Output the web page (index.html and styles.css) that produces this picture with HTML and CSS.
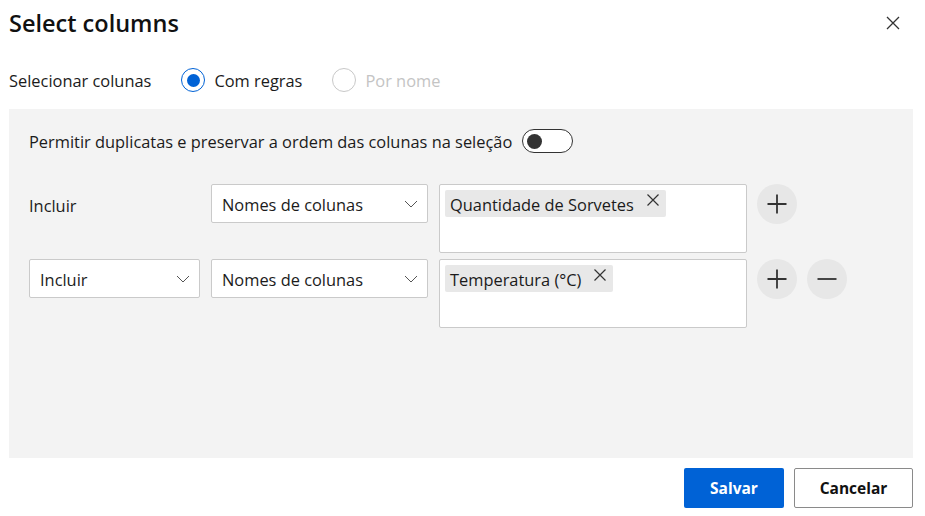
FILE: index.html
```html
<!DOCTYPE html>
<html lang="pt">
<head>
<meta charset="utf-8">
<title>Select columns</title>
<link rel="stylesheet" href="styles.css">
</head>
<body>
<div class="dialog">
  <header class="header">
    <h1 class="title">Select columns</h1>
    <button class="close" aria-label="Fechar">
      <svg width="14" height="14" viewBox="0 0 14 14"><path d="M1 1L13 13M13 1L1 13" stroke="#333" stroke-width="1.3" fill="none"/></svg>
    </button>
  </header>

  <div class="mode-row">
    <span class="mode-label">Selecionar colunas</span>
    <label class="radio checked"><span class="radio-circle"><span class="radio-dot"></span></span>Com regras</label>
    <label class="radio disabled"><span class="radio-circle"></span>Por nome</label>
  </div>

  <section class="panel">
    <div class="toggle-row">
      <span>Permitir duplicatas e preservar a ordem das colunas na seleção</span>
      <span class="toggle"><span class="knob"></span></span>
    </div>

    <div class="rules">
      <div class="rule">
        <div class="rule-label">Incluir</div>
        <div class="dropdown"><span class="dd-text">Nomes de colunas</span>
          <svg class="chev" width="14" height="8" viewBox="0 0 14 8"><path d="M1 1L7 7L13 1" stroke="#555" stroke-width="1" fill="none"/></svg>
        </div>
        <div class="tagbox">
          <span class="tag"><span class="tag-text">Quantidade de Sorvetes</span>
            <svg class="tag-x" width="12" height="12" viewBox="0 0 12 12"><path d="M0.5 0.5L11.5 11.5M11.5 0.5L0.5 11.5" stroke="#333" stroke-width="1.2" fill="none"/></svg>
          </span>
        </div>
        <div class="actions">
          <button class="round" aria-label="Adicionar">
            <svg width="20" height="20" viewBox="0 0 20 20"><path d="M10 0.5V19.5M0.5 10H19.5" stroke="#333" stroke-width="1.8" fill="none"/></svg>
          </button>
        </div>
      </div>

      <div class="rule">
        <div class="dropdown"><span class="dd-text">Incluir</span>
          <svg class="chev" width="14" height="8" viewBox="0 0 14 8"><path d="M1 1L7 7L13 1" stroke="#555" stroke-width="1" fill="none"/></svg>
        </div>
        <div class="dropdown"><span class="dd-text">Nomes de colunas</span>
          <svg class="chev" width="14" height="8" viewBox="0 0 14 8"><path d="M1 1L7 7L13 1" stroke="#555" stroke-width="1" fill="none"/></svg>
        </div>
        <div class="tagbox">
          <span class="tag"><span class="tag-text">Temperatura (°C)</span>
            <svg class="tag-x" width="12" height="12" viewBox="0 0 12 12"><path d="M0.5 0.5L11.5 11.5M11.5 0.5L0.5 11.5" stroke="#333" stroke-width="1.2" fill="none"/></svg>
          </span>
        </div>
        <div class="actions">
          <button class="round" aria-label="Adicionar">
            <svg width="20" height="20" viewBox="0 0 20 20"><path d="M10 0.5V19.5M0.5 10H19.5" stroke="#333" stroke-width="1.8" fill="none"/></svg>
          </button>
          <button class="round" aria-label="Remover">
            <svg width="20" height="20" viewBox="0 0 20 20"><path d="M0.5 10H19.5" stroke="#333" stroke-width="1.8" fill="none"/></svg>
          </button>
        </div>
      </div>
    </div>
  </section>

  <footer class="footer">
    <button class="btn primary">Salvar</button>
    <button class="btn secondary">Cancelar</button>
  </footer>
</div>
</body>
</html>
```

FILE: styles.css
```css
* { box-sizing: border-box; }

html, body {
  margin: 0;
  padding: 0;
  background: #ffffff;
}

body {
  font-family: "Open Sans", "Noto Sans", sans-serif;
  font-size: 16.4px;
  color: #1b1b1b;
  width: 925px;
  height: 516px;
  overflow: hidden;
}

.dialog {
  padding: 0 12px 0 9px;
}

.header {
  height: 46px;
  display: flex;
  align-items: center;
  justify-content: space-between;
}

.title {
  margin: 0;
  font-size: 23.5px;
  font-weight: 600;
  color: #111;
  letter-spacing: 0;
}

.close {
  border: 0;
  background: transparent;
  padding: 0;
  width: 14px;
  height: 14px;
  margin-right: 13px;
  display: flex;
}

.mode-row {
  margin-top: 20px;
  height: 28px;
  display: flex;
  align-items: center;
}

.mode-label {
  margin-right: 30px;
}

.radio {
  display: flex;
  align-items: center;
  gap: 9px;
  margin-right: 30px;
}

.radio-circle {
  width: 24px;
  height: 24px;
  border-radius: 50%;
  border: 1.5px solid #c8c8c8;
  display: flex;
  align-items: center;
  justify-content: center;
}

.radio.checked .radio-circle {
  border-color: #0062d6;
}

.radio-dot {
  width: 13px;
  height: 13px;
  border-radius: 50%;
  background: #0062d6;
}

.radio.disabled {
  color: #c4c4c4;
}

.panel {
  margin-top: 15px;
  height: 349px;
  background: #f3f3f3;
  padding: 20px 20px 0 20px;
}

.toggle-row {
  height: 24px;
  display: flex;
  align-items: center;
  gap: 10px;
}

.toggle {
  width: 51px;
  height: 24px;
  border: 1px solid #333;
  border-radius: 12px;
  background: #fff;
  display: flex;
  align-items: center;
  padding-left: 4px;
}

.knob {
  width: 15px;
  height: 15px;
  border-radius: 50%;
  background: #333;
}

.rules {
  margin-top: 31px;
  display: flex;
  flex-direction: column;
  gap: 6px;
}

.rule {
  display: grid;
  grid-template-columns: 171px 217px 308px auto;
  column-gap: 11px;
  align-items: start;
}

.rule-label {
  height: 39px;
  display: flex;
  align-items: center;
  padding-top: 3px;
}

.dropdown {
  height: 39px;
  background: #fff;
  border: 1px solid #cacaca;
  border-radius: 2px;
  display: flex;
  align-items: center;
  justify-content: space-between;
  padding: 0 9px 0 10px;
}

.dd-text {
  padding-top: 2px;
}

.chev {
  display: block;
}

.tagbox {
  height: 69px;
  background: #fff;
  border: 1px solid #cacaca;
  border-radius: 2px;
  padding: 5px;
}

.tag {
  display: inline-flex;
  align-items: center;
  height: 27px;
  background: #e8e8e8;
  border-radius: 2px;
  padding: 0 7px 0 5px;
  gap: 13px;
}

.tag-text {
  padding-top: 2px;
}

.tag-x {
  margin-top: -7px;
}

.actions {
  display: flex;
  gap: 10px;
  margin-left: -1px;
}

.round {
  width: 40px;
  height: 40px;
  border: 0;
  border-radius: 50%;
  background: #e7e7e7;
  padding: 0;
  display: flex;
  align-items: center;
  justify-content: center;
}

.footer {
  margin-top: 10px;
  display: flex;
  justify-content: flex-end;
  gap: 10px;
}

.btn {
  height: 40px;
  font-family: inherit;
  font-size: 15.5px;
  font-weight: 700;
  border-radius: 2px;
  padding: 0;
}

.primary {
  width: 100px;
  background: #0062d6;
  border: 0;
  color: #fff;
}

.secondary {
  width: 119px;
  background: #fff;
  border: 1px solid #8a8a8a;
  color: #111;
}
```
